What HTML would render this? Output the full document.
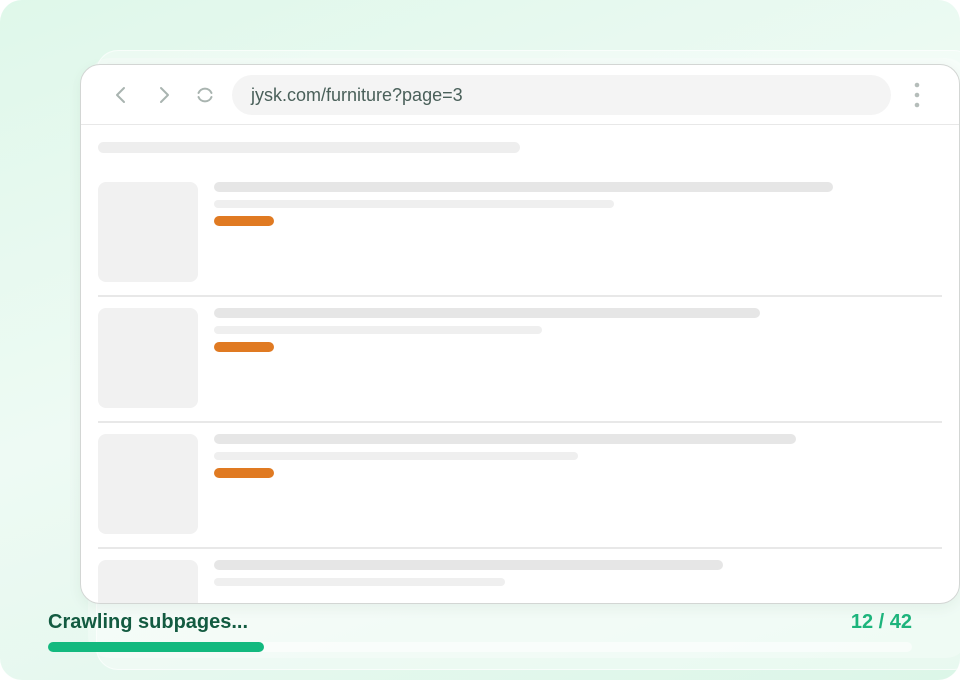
<!DOCTYPE html>
<html><head><style>
*{margin:0;padding:0;box-sizing:border-box}
body{width:960px;height:680px;overflow:hidden;background:#fff;font-family:"Liberation Sans",sans-serif}
.bg{position:absolute;left:0;top:0;width:960px;height:680px;border-radius:22px;background:linear-gradient(160deg,#dff8ea 0%,#eefaf4 45%,#dcf6e8 100%);overflow:hidden}
.ghost1{position:absolute;left:96px;top:50px;width:880px;height:620px;border-radius:22px;background:rgba(255,255,255,.35);border:1px solid rgba(255,255,255,.6)}
.ghost2{position:absolute;left:88px;top:58px;width:880px;height:600px;border-radius:22px;background:rgba(255,255,255,.3)}
.card{position:absolute;left:80px;top:64px;width:880px;height:540px;border-radius:20px;background:#fff;border:1.5px solid #d3d6d4;overflow:hidden;box-shadow:0 4px 14px rgba(0,60,30,.06)}
.bar{position:absolute;border-radius:6px}
.top{position:absolute;left:0;top:0;right:0;height:60px;border-bottom:1px solid #e8e8e8}
.url{position:absolute;left:151px;top:10px;width:659px;height:40px;border-radius:20px;background:#f4f4f4;font-size:18px;color:#4a605a;line-height:40px;padding-left:19px}
.sep{position:absolute;left:17px;right:17px;height:1.5px;background:#e8e8e8}
.thumb{position:absolute;left:17px;width:100px;height:100px;border-radius:8px;background:#f1f1f1}
.lbl{position:absolute;left:48px;top:611px;font-size:20px;font-weight:bold;color:#135b41}
.cnt{position:absolute;right:48px;top:611px;font-size:20px;font-weight:bold;color:#1db47c}
</style></head><body>
<div class="bg">
<div class="ghost1"></div><div class="ghost2"></div>
<div class="card">
 <div class="top">
  <svg style="position:absolute;left:30px;top:20px" width="20" height="20" viewBox="0 0 20 20"><path d="M13 3 L6 10 L13 17" fill="none" stroke="#a9b4b0" stroke-width="2" stroke-linecap="round" stroke-linejoin="round"/></svg>
  <svg style="position:absolute;left:73px;top:20px" width="20" height="20" viewBox="0 0 20 20"><path d="M7 3 L14 10 L7 17" fill="none" stroke="#a9b4b0" stroke-width="2" stroke-linecap="round" stroke-linejoin="round"/></svg>
  <svg style="position:absolute;left:114px;top:20px" width="20" height="20" viewBox="0 0 20 20"><path d="M16.5 8 A7 7 0 0 0 3.5 8 M3.5 12 A7 7 0 0 0 16.5 12" fill="none" stroke="#a9b4b0" stroke-width="2" stroke-linecap="round"/></svg>
  <div class="url">jysk.com/furniture?page=3</div>
  <svg style="position:absolute;left:830px;top:16px" width="12" height="28"><circle cx="6" cy="4" r="2.3" fill="#b5bdba"/><circle cx="6" cy="14" r="2.3" fill="#b5bdba"/><circle cx="6" cy="24" r="2.3" fill="#b5bdba"/></svg>
 </div>
 <div class="bar" style="left:17px;top:77px;width:422px;height:11px;background:#eeeeee"></div>

 <div class="thumb" style="top:117px"></div>
 <div class="bar" style="left:133px;top:117px;width:619px;height:10px;background:#e6e6e6"></div>
 <div class="bar" style="left:133px;top:135px;width:400px;height:8px;background:#efefef"></div>
 <div class="bar" style="left:133px;top:151px;width:60px;height:10px;background:#e07a22"></div>
 <div class="sep" style="top:230px"></div>

 <div class="thumb" style="top:243px"></div>
 <div class="bar" style="left:133px;top:243px;width:546px;height:10px;background:#e6e6e6"></div>
 <div class="bar" style="left:133px;top:261px;width:328px;height:8px;background:#efefef"></div>
 <div class="bar" style="left:133px;top:277px;width:60px;height:10px;background:#e07a22"></div>
 <div class="sep" style="top:356px"></div>

 <div class="thumb" style="top:369px"></div>
 <div class="bar" style="left:133px;top:369px;width:582px;height:10px;background:#e6e6e6"></div>
 <div class="bar" style="left:133px;top:387px;width:364px;height:8px;background:#efefef"></div>
 <div class="bar" style="left:133px;top:403px;width:60px;height:10px;background:#e07a22"></div>
 <div class="sep" style="top:482px"></div>

 <div class="thumb" style="top:495px"></div>
 <div class="bar" style="left:133px;top:495px;width:509px;height:10px;background:#e6e6e6"></div>
 <div class="bar" style="left:133px;top:513px;width:291px;height:8px;background:#efefef"></div>
</div>
<div class="lbl">Crawling subpages...</div>
<div class="cnt">12 / 42</div>
<div class="bar" style="left:48px;top:642px;width:864px;height:10px;background:rgba(255,255,255,.55)"></div>
<div class="bar" style="left:48px;top:642px;width:216px;height:10px;background:#13b97f"></div>
</div>
</body></html>
